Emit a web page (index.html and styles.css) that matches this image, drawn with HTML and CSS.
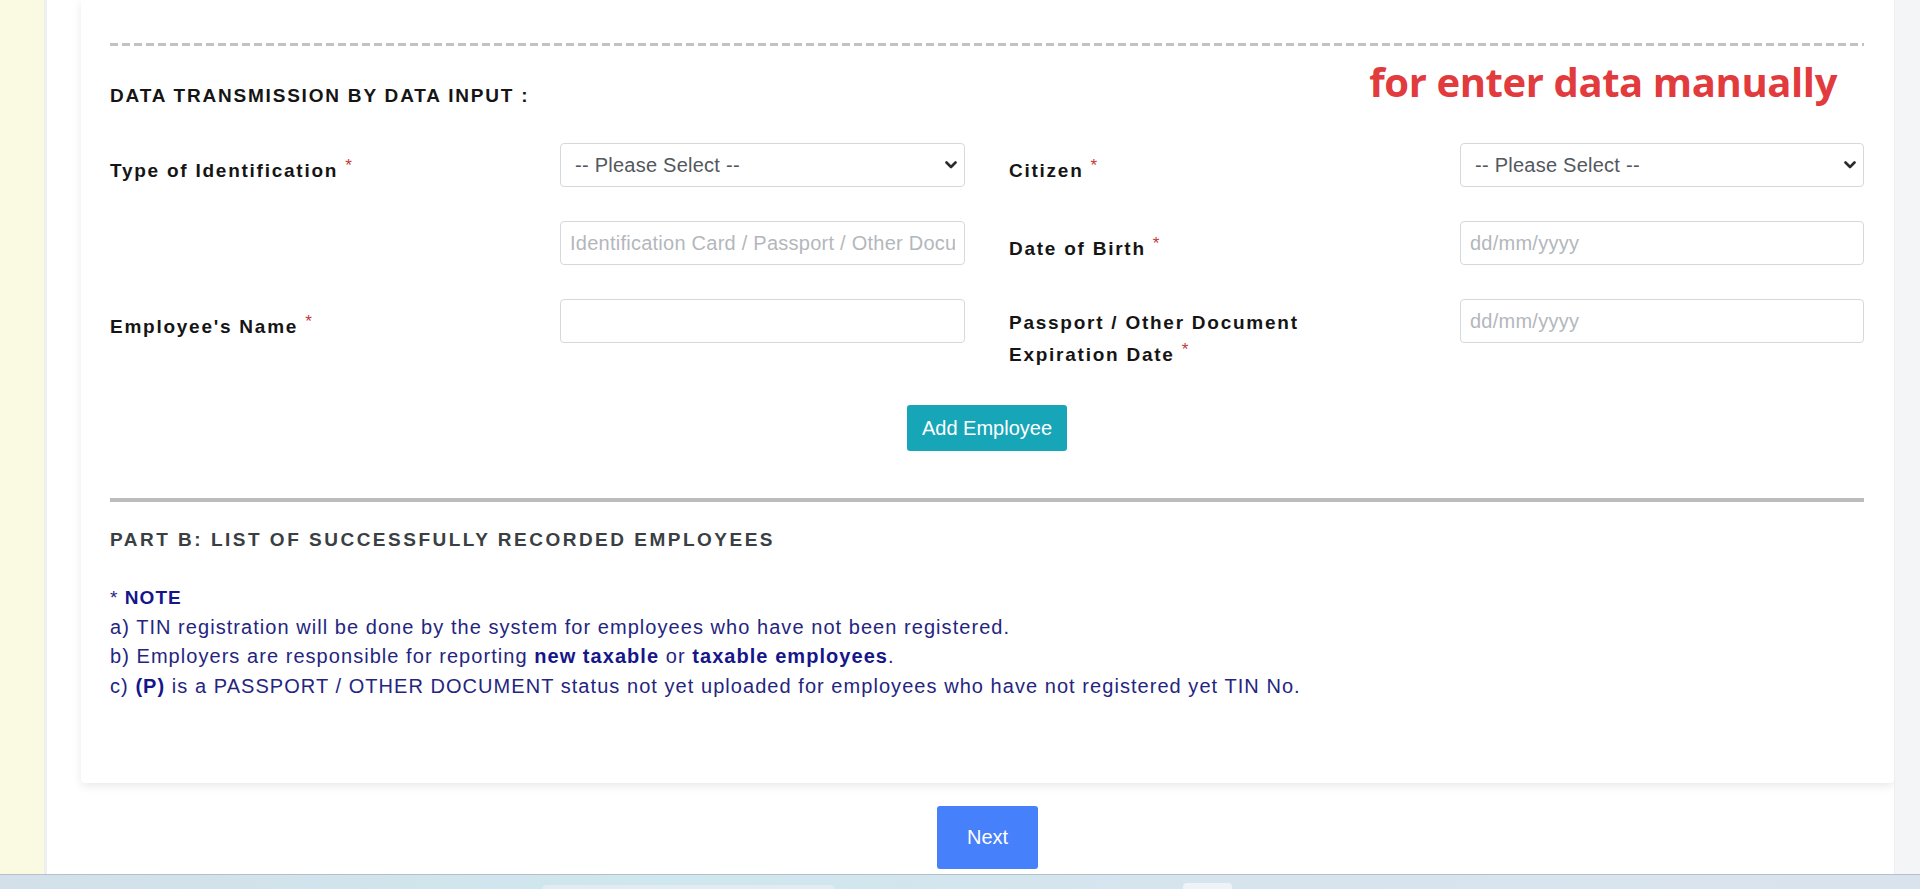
FILE: index.html
```html
<!DOCTYPE html>
<html lang="en">
<head>
<meta charset="utf-8">
<title>Data Transmission by Data Input</title>
<link rel="stylesheet" href="styles.css">
</head>
<body>
<div class="screen">
  <div class="workspace">
    <aside class="sidebar"></aside>
    <main class="content">
      <section class="card">
        <div class="dashed-rule"></div>
        <div class="section-head">
          <h4 class="section-title">DATA TRANSMISSION BY DATA INPUT :</h4>
          <div class="annotation">for enter data manually</div>
        </div>

        <div class="form-grid">
          <label class="field-label">Type of Identification <span class="req">*</span></label>
          <div class="select-wrap">
            <select class="control select">
              <option>-- Please Select --</option>
            </select>
            <svg class="chevron" width="12" height="8" viewBox="0 0 12 8"><path d="M1.5 1.5 L6 6 L10.5 1.5" fill="none" stroke="#2b2b2b" stroke-width="2.6" stroke-linecap="round" stroke-linejoin="round"/></svg>
          </div>
          <label class="field-label right">Citizen <span class="req">*</span></label>
          <div class="select-wrap">
            <select class="control select">
              <option>-- Please Select --</option>
            </select>
            <svg class="chevron" width="12" height="8" viewBox="0 0 12 8"><path d="M1.5 1.5 L6 6 L10.5 1.5" fill="none" stroke="#2b2b2b" stroke-width="2.6" stroke-linecap="round" stroke-linejoin="round"/></svg>
          </div>

          <div class="field-label"></div>
          <input class="control" type="text" placeholder="Identification Card / Passport / Other Document Number">
          <label class="field-label right">Date of Birth <span class="req">*</span></label>
          <input class="control" type="text" placeholder="dd/mm/yyyy">

          <label class="field-label">Employee's Name <span class="req">*</span></label>
          <input class="control" type="text">
          <label class="field-label right two-line">Passport / Other Document<br>Expiration Date <span class="req">*</span></label>
          <input class="control" type="text" placeholder="dd/mm/yyyy">
        </div>

        <div class="add-row">
          <button class="btn btn-add" type="button">Add Employee</button>
        </div>

        <div class="solid-rule"></div>

        <h4 class="part-title">PART B: LIST OF SUCCESSFULLY RECORDED EMPLOYEES</h4>

        <div class="note">
          <div class="note-head">* <b>NOTE</b></div>
          <div>a) TIN registration will be done by the system for employees who have not been registered.</div>
          <div>b) Employers are responsible for reporting <b>new taxable</b> or <b>taxable employees</b>.</div>
          <div>c) <b>(P)</b> is a PASSPORT / OTHER DOCUMENT status not yet uploaded for employees who have not registered yet TIN No.</div>
        </div>
      </section>

      <div class="actions">
        <button class="btn btn-next" type="button">Next</button>
      </div>
    </main>
    <div class="scroll-strip"></div>
  </div>
  <div class="taskbar">
    <div class="task-search"></div>
    <div class="task-icon"></div>
  </div>
</div>
</body>
</html>
```

FILE: styles.css
```css
* { box-sizing: border-box; }

html, body {
  margin: 0;
  padding: 0;
  width: 1920px;
  height: 889px;
  overflow: hidden;
  background: #ffffff;
  font-family: "Liberation Sans", Arial, sans-serif;
}

.screen {
  display: flex;
  flex-direction: column;
  height: 889px;
}

.workspace {
  display: flex;
  height: 874px;
}

.sidebar {
  width: 47px;
  flex: none;
  background: #fafae3;
  border-right: 3px solid #eef0f0;
}

.content {
  flex: 1;
  display: flex;
  flex-direction: column;
  padding-left: 34px;
}

.scroll-strip {
  width: 26px;
  flex: none;
  background: #f4f5f7;
  border-left: 1px solid #eceef0;
}

.card {
  background: #ffffff;
  padding: 43px 30px 82px 29px;
  box-shadow: 0 3px 10px rgba(0, 0, 0, 0.09);
  border-radius: 0 0 4px 4px;
}

.dashed-rule {
  height: 3px;
  background: repeating-linear-gradient(90deg, #c2c2c2 0 8px, transparent 8px 12px);
}

.section-head {
  display: flex;
  justify-content: space-between;
  align-items: flex-start;
}

.section-title {
  margin: 38px 0 0;
  font-size: 19px;
  line-height: 24px;
  font-weight: 700;
  letter-spacing: 1.8px;
  color: #151515;
}

.annotation {
  margin: 14px 27px 0 0;
  font-family: "Open Sans", "Liberation Sans", sans-serif;
  font-weight: 700;
  font-size: 40px;
  line-height: 44px;
  color: #e23b3d;
  letter-spacing: -0.4px;
}

.form-grid {
  margin-top: 35px;
  display: grid;
  grid-template-columns: 450px 405px 495px 1fr;
  row-gap: 34px;
  align-items: start;
}

.field-label {
  font-size: 19px;
  line-height: 32px;
  font-weight: 700;
  letter-spacing: 1.75px;
  color: #151515;
  padding-top: 12px;
}

.field-label.right { padding-left: 44px; }
.field-label.two-line { padding-top: 8px; }

.req {
  color: #c23a36;
  font-size: 17px;
  font-weight: 400;
  line-height: 0;
  vertical-align: 6px;
  letter-spacing: 0;
}

.control {
  display: block;
  width: 100%;
  height: 44px;
  border: 1px solid #d6d9dc;
  border-radius: 4px;
  background: #ffffff;
  font-family: "Liberation Sans", Arial, sans-serif;
  font-size: 20px;
  letter-spacing: 0.25px;
  color: #53585d;
  padding: 0 9px;
  outline: none;
}

.control::placeholder { color: #b3b7bc; }

.select-wrap { position: relative; }

.select {
  appearance: none;
  -webkit-appearance: none;
  padding-left: 14px;
  padding-right: 30px;
}

.chevron {
  position: absolute;
  right: 8px;
  top: 18px;
  pointer-events: none;
}

.add-row {
  display: flex;
  justify-content: center;
  margin-top: 34px;
}

.btn {
  border: none;
  font-family: "Liberation Sans", Arial, sans-serif;
  font-size: 20px;
  color: #ffffff;
  border-radius: 3px;
  cursor: pointer;
}

.btn-add {
  width: 160px;
  height: 46px;
  background: #17a5b8;
}

.solid-rule {
  margin-top: 47px;
  height: 4px;
  background: #bcbcbc;
}

.part-title {
  margin: 26px 0 0;
  font-size: 19px;
  line-height: 24px;
  font-weight: 700;
  letter-spacing: 2.5px;
  color: #3a3f44;
}

.note {
  margin-top: 31px;
  font-size: 20px;
  line-height: 29.5px;
  letter-spacing: 1.05px;
  color: #25257f;
}

.note b { color: #16168a; }

.note-head { font-size: 19px; }

.actions {
  display: flex;
  justify-content: center;
  margin-top: 23px;
}

.btn-next {
  width: 101px;
  height: 63px;
  background: #4680fb;
}

.taskbar {
  position: relative;
  height: 15px;
  border-top: 1px solid #b7c0c8;
  background: linear-gradient(90deg, #d3e0ea 0%, #cfe7ee 35%, #d6e4ee 60%, #d9e3ee 100%);
}

.task-search {
  position: absolute;
  left: 542px;
  top: 10px;
  width: 293px;
  height: 10px;
  border-radius: 5px;
  background: #e2ebf2;
}

.task-icon {
  position: absolute;
  left: 1183px;
  top: 8px;
  width: 49px;
  height: 10px;
  border-radius: 4px;
  background: #eef3f7;
}
```
